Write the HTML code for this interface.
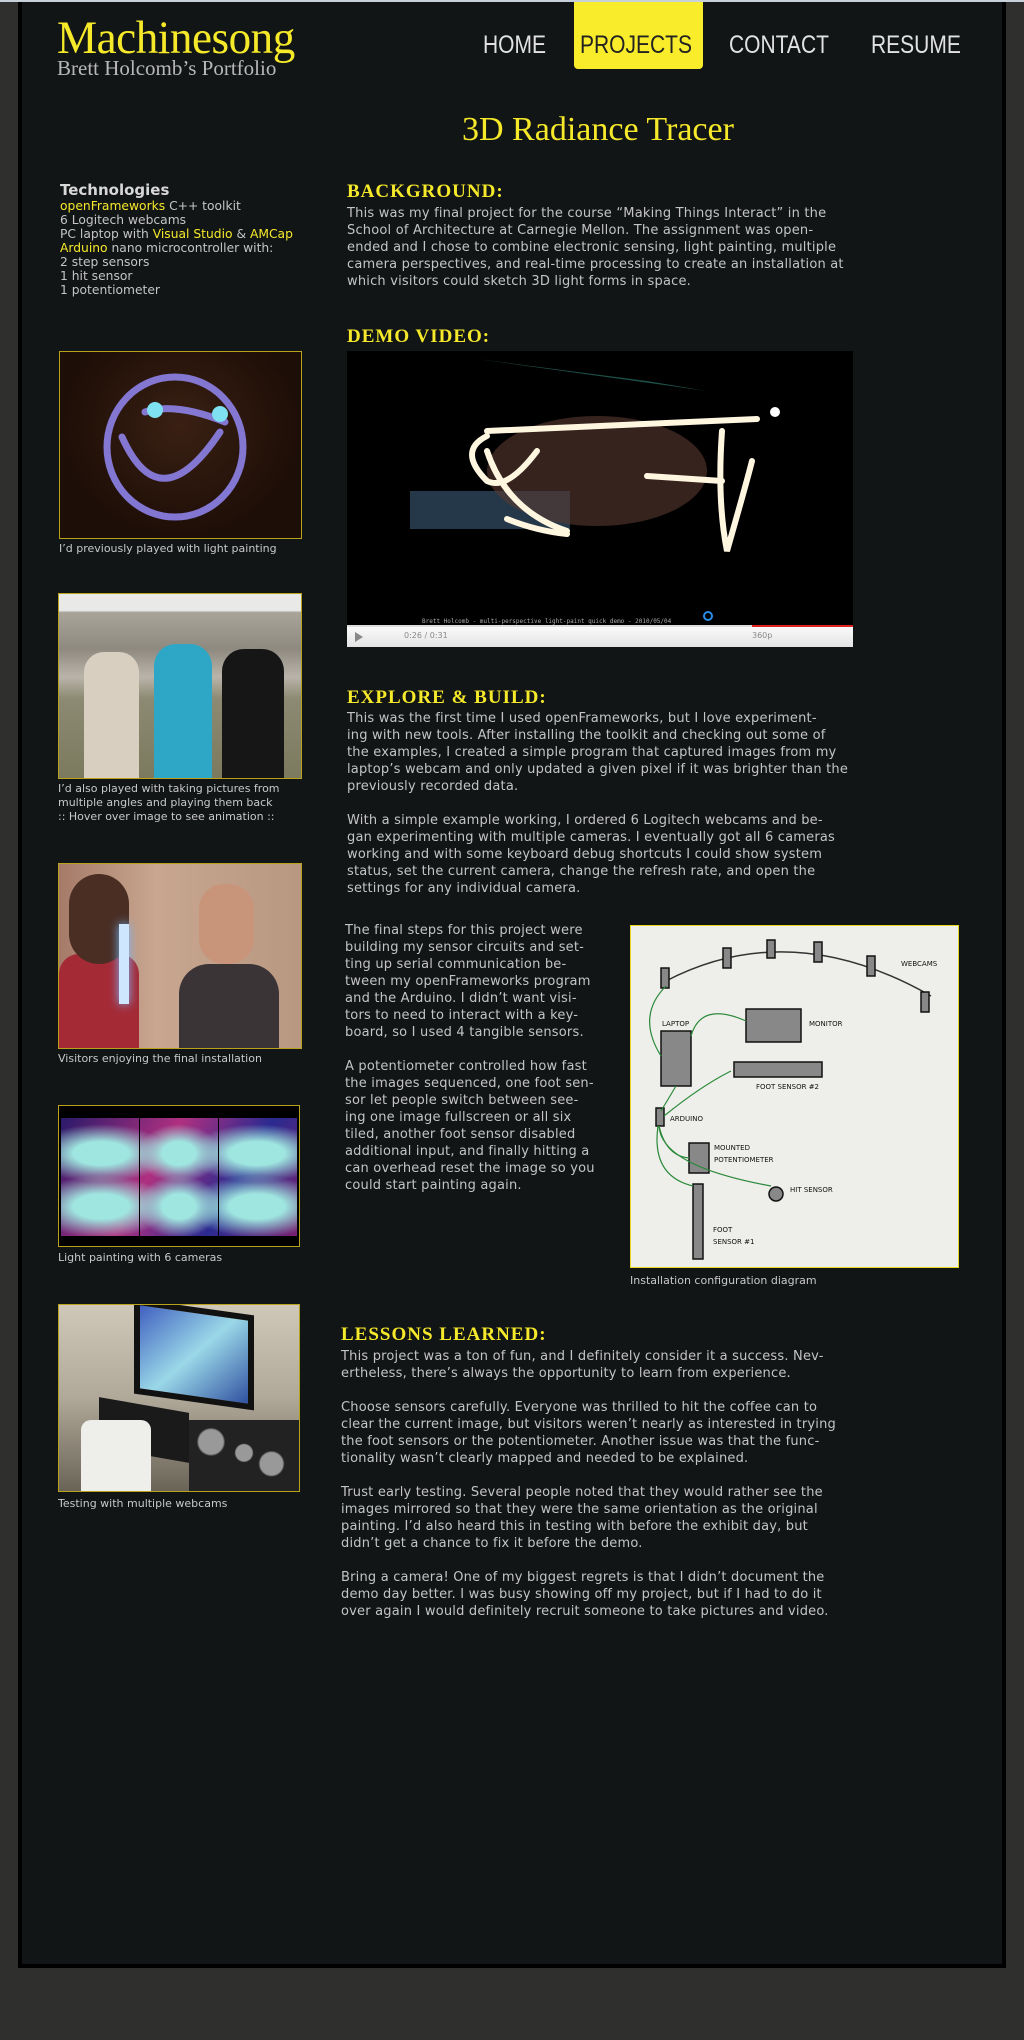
<!DOCTYPE html>
<html><head><meta charset="utf-8"><style>
*{margin:0;padding:0;box-sizing:border-box}
html,body{width:1024px;height:2040px;background:#2f2f2d;overflow:hidden}
body{position:relative;font-family:"DejaVu Sans","Liberation Sans",sans-serif}
.topline{position:absolute;left:0;top:0;width:1024px;height:2px;background:#c8d0da}
.panel{position:absolute;left:18px;top:2px;width:988px;height:1966px;background:#121516;border:4px solid #000;border-top:none}
.a{position:absolute;white-space:nowrap}
.logo{left:57px;top:11px;font-family:"Liberation Serif",serif;font-size:47px;color:#f5e92a;letter-spacing:-0.5px;transform:scaleX(0.96);transform-origin:left}
.sub{left:57px;top:56px;font-family:"Liberation Serif",serif;font-size:21px;color:#b8b8b8}
.nav{top:31px;font-family:"Liberation Sans",sans-serif;font-size:25px;color:#e2e2e2;transform:scaleX(0.84);transform-origin:left}
.pbox{position:absolute;left:574px;top:2px;width:129px;height:67px;background:#f9ec2a;border-radius:0 0 4px 4px}
.title{left:462px;top:111px;font-family:"Liberation Serif",serif;font-size:34px;color:#f5e92a}
.h{font-family:"Liberation Serif",serif;font-weight:bold;font-size:19px;color:#f5e92a;letter-spacing:1px}
.p{font-size:13px;line-height:17px;color:#c4c4c4;letter-spacing:0.2px}
.l{font-size:12.3px;line-height:14px;color:#c4c4c4}
.y{color:#f5e92a}
.cap{font-size:11px;line-height:14px;color:#c8c8c8}
.img{position:absolute;border:1px solid #b9a21a;overflow:hidden}
</style></head><body>
<div class="topline"></div>
<div class="panel"></div>
<div class="a logo">Machinesong</div>
<div class="a sub">Brett Holcomb’s Portfolio</div>
<div class="pbox"></div>
<div class="a nav" style="left:483px">HOME</div>
<div class="a nav" style="left:580px;color:#222">PROJECTS</div>
<div class="a nav" style="left:729px">CONTACT</div>
<div class="a nav" style="left:871px">RESUME</div>
<div class="a title">3D Radiance Tracer</div>

<div class="a l" style="left:60px;top:181px"><b style="font-size:15px;color:#d8d8d8;line-height:18px">Technologies</b><br><span class="y">openFrameworks</span> C++ toolkit<br>6 Logitech webcams<br>PC laptop with <span class="y">Visual Studio</span> &amp; <span class="y">AMCap</span><br><span class="y">Arduino</span> nano microcontroller with:<br>2 step sensors<br>1 hit sensor<br>1 potentiometer</div>

<div class="img" style="left:59px;top:351px;width:243px;height:188px;background:radial-gradient(ellipse at 50% 40%,#3a2013,#1d0e07 70%)">
<svg width="243" height="188"><g fill="none" stroke="#8d82e8" stroke-width="7" stroke-linecap="round" opacity=".9"><ellipse cx="115" cy="95" rx="68" ry="70"/><path d="M62 85 Q100 170 160 80"/><path d="M85 60 Q115 50 165 70"/></g><circle cx="95" cy="58" r="8" fill="#7ee0f0"/><circle cx="160" cy="62" r="8" fill="#7ee0f0"/></svg></div>
<div class="a cap" style="left:59px;top:542px">I’d previously played with light painting</div>

<div class="img" style="left:58px;top:593px;width:244px;height:186px;background:linear-gradient(#e9eae8 0,#e9eae8 9%,#a8a49a 10%,#8f8a80 30%,#b9b4aa 45%,#8c8a72 57%,#7b7a5e 100%)">
<div style="position:absolute;left:25px;top:58px;width:55px;height:130px;background:#d9cfc0;border-radius:20px 20px 0 0"></div>
<div style="position:absolute;left:95px;top:50px;width:58px;height:136px;background:#2ea7c6;border-radius:22px 22px 0 0"></div>
<div style="position:absolute;left:163px;top:55px;width:62px;height:131px;background:#161616;border-radius:22px 22px 0 0"></div></div>
<div class="a cap" style="left:58px;top:782px">I’d also played with taking pictures from<br>multiple angles and playing them back<br>:: Hover over image to see animation ::</div>

<div class="img" style="left:58px;top:863px;width:244px;height:186px;background:linear-gradient(90deg,#a57a68,#c8a690 40%,#b89880 100%)">
<div style="position:absolute;left:0;top:90px;width:80px;height:96px;background:#a42a36;border-radius:20px 20px 0 0"></div>
<div style="position:absolute;left:10px;top:10px;width:60px;height:90px;background:#4a2e24;border-radius:30px"></div>
<div style="position:absolute;left:120px;top:100px;width:100px;height:86px;background:#3a3436;border-radius:30px 30px 0 0"></div>
<div style="position:absolute;left:140px;top:20px;width:55px;height:80px;background:#c8957a;border-radius:25px"></div>
<div style="position:absolute;left:60px;top:60px;width:10px;height:80px;background:#cfe6ff;box-shadow:0 0 10px #7bf"></div></div>
<div class="a cap" style="left:58px;top:1052px">Visitors enjoying the final installation</div>

<div class="img" style="left:58px;top:1105px;width:242px;height:142px;background:#000">
<div style="position:absolute;left:2px;top:12px;width:236px;height:118px;background:repeating-linear-gradient(90deg,transparent 0 78px,#000 78px 79px),radial-gradient(ellipse at 17% 30%,#9fe6e0 10%,transparent 25%),radial-gradient(ellipse at 50% 30%,#9fe6e0 10%,transparent 25%),radial-gradient(ellipse at 83% 30%,#9fe6e0 10%,transparent 25%),radial-gradient(ellipse at 17% 75%,#9fe6e0 10%,transparent 25%),radial-gradient(ellipse at 50% 75%,#9fe6e0 10%,transparent 25%),radial-gradient(ellipse at 83% 75%,#9fe6e0 10%,transparent 25%),linear-gradient(120deg,#2a1a6a,#b03080 40%,#2a2a90 70%,#7a2070)"></div></div>
<div class="a cap" style="left:58px;top:1251px">Light painting with 6 cameras</div>

<div class="img" style="left:58px;top:1304px;width:242px;height:188px;background:linear-gradient(#cfc8b8,#b0a898 50%,#6a6458)">
<div style="position:absolute;left:75px;top:2px;width:120px;height:95px;background:linear-gradient(135deg,#4060c0,#9ad8e8 50%,#3050a0);border:6px solid #111;transform:skewY(8deg)"></div>
<div style="position:absolute;left:40px;top:100px;width:90px;height:50px;background:#1a1a1a;transform:skewY(10deg)"></div>
<div style="position:absolute;left:130px;top:115px;width:110px;height:73px;background:radial-gradient(circle at 20% 30%,#999 12%,transparent 14%),radial-gradient(circle at 50% 45%,#999 12%,transparent 14%),radial-gradient(circle at 75% 60%,#999 12%,transparent 14%),#222"></div>
<div style="position:absolute;left:22px;top:115px;width:70px;height:80px;background:#eeeeea;border-radius:10px 10px 0 0"></div></div>
<div class="a cap" style="left:58px;top:1497px">Testing with multiple webcams</div>

<div class="a h" style="left:347px;top:181px">BACKGROUND:</div>
<div class="a p" style="left:347px;top:205px">This was my final project for the course “Making Things Interact” in the<br>School of Architecture at Carnegie Mellon. The assignment was open-<br>ended and I chose to combine electronic sensing, light painting, multiple<br>camera perspectives, and real-time processing to create an installation at<br>which visitors could sketch 3D light forms in space.</div>

<div class="a h" style="left:347px;top:326px">DEMO VIDEO:</div>
<div style="position:absolute;left:347px;top:351px;width:506px;height:296px;background:#000;overflow:hidden">
<svg width="506" height="274"><path d="M130 8 L300 30 L360 40 L130 8Z" fill="#1d5048"/><rect x="63" y="140" width="160" height="38" fill="#34506a" opacity=".7"/><ellipse cx="250" cy="120" rx="110" ry="55" fill="#5a3a30" opacity=".6"/><g fill="none" stroke="#fff6e0" stroke-width="6" stroke-linecap="round"><path d="M140 80 L410 68"/><path d="M140 85 Q110 100 140 130 Q160 140 190 100"/><path d="M140 100 Q160 160 220 180"/><path d="M300 125 L375 130"/><path d="M375 80 Q370 150 380 200 Q400 130 405 110"/><path d="M160 168 Q190 180 220 183"/></g><circle cx="428" cy="61" r="5" fill="#fff"/><text x="75" y="272" font-family="DejaVu Sans Mono,monospace" font-size="6" fill="#aaa">Brett Holcomb - multi-perspective light-paint quick demo - 2010/05/04</text><circle cx="361" cy="265" r="4" fill="none" stroke="#2a8ae8" stroke-width="2"/></svg>
<div style="position:absolute;left:0;top:274px;width:506px;height:22px;background:linear-gradient(#fafafa,#e4e4e4);border-top:2px solid #ddd"></div>
<div style="position:absolute;left:405px;top:274px;width:101px;height:2px;background:#d22"></div>
<div style="position:absolute;left:8px;top:281px;width:0;height:0;border-left:8px solid #888;border-top:5px solid transparent;border-bottom:5px solid transparent"></div>
<div class="a" style="left:57px;top:280px;font-size:8px;color:#888">0:26 / 0:31</div>
<div class="a" style="left:405px;top:280px;font-size:8px;color:#888">360p</div></div>

<div class="a h" style="left:347px;top:687px">EXPLORE &amp; BUILD:</div>
<div class="a p" style="left:347px;top:710px">This was the first time I used openFrameworks, but I love experiment-<br>ing with new tools. After installing the toolkit and checking out some of<br>the examples, I created a simple program that captured images from my<br>laptop’s webcam and only updated a given pixel if it was brighter than the<br>previously recorded data.<br><br>With a simple example working, I ordered 6 Logitech webcams and be-<br>gan experimenting with multiple cameras. I eventually got all 6 cameras<br>working and with some keyboard debug shortcuts I could show system<br>status, set the current camera, change the refresh rate, and open the<br>settings for any individual camera.</div>

<div class="a p" style="left:345px;top:922px">The final steps for this project were<br>building my sensor circuits and set-<br>ting up serial communication be-<br>tween my openFrameworks program<br>and the Arduino. I didn’t want visi-<br>tors to need to interact with a key-<br>board, so I used 4 tangible sensors.<br><br>A potentiometer controlled how fast<br>the images sequenced, one foot sen-<br>sor let people switch between see-<br>ing one image fullscreen or all six<br>tiled, another foot sensor disabled<br>additional input, and finally hitting a<br>can overhead reset the image so you<br>could start painting again.</div>

<div class="img" style="left:630px;top:925px;width:329px;height:343px;background:#eeeeea;border-color:#e8d820">
<svg width="329" height="343" font-family="DejaVu Sans,sans-serif" font-size="7" fill="#111"><path d="M35 55 Q160 -10 300 70" fill="none" stroke="#333" stroke-width="1.5"/><g fill="#888" stroke="#111" stroke-width="1.5"><rect x="30" y="42" width="8" height="20"/><rect x="92" y="22" width="8" height="20"/><rect x="136" y="14" width="8" height="18"/><rect x="183" y="16" width="8" height="20"/><rect x="236" y="30" width="8" height="20"/><rect x="290" y="66" width="8" height="20"/><rect x="30" y="105" width="30" height="55"/><rect x="115" y="83" width="55" height="33"/><rect x="103" y="136" width="88" height="15"/><rect x="25" y="182" width="8" height="18"/><rect x="58" y="217" width="20" height="30"/><rect x="62" y="258" width="10" height="75"/><circle cx="145" cy="268" r="7"/></g><g fill="none" stroke="#2a8a3a" stroke-width="1.2"><path d="M35 60 Q5 90 30 130"/><path d="M60 110 Q70 75 115 95"/><path d="M45 160 L30 185"/><path d="M33 190 Q70 160 100 145"/><path d="M28 200 Q35 230 58 232"/><path d="M27 200 Q20 250 62 260"/><path d="M28 200 Q30 240 140 260"/></g><text x="270" y="40">WEBCAMS</text><text x="31" y="100">LAPTOP</text><text x="178" y="100">MONITOR</text><text x="125" y="163">FOOT SENSOR #2</text><text x="39" y="195">ARDUINO</text><text x="83" y="224">MOUNTED</text><text x="83" y="236">POTENTIOMETER</text><text x="159" y="266">HIT SENSOR</text><text x="82" y="306">FOOT</text><text x="82" y="318">SENSOR #1</text></svg></div>
<div class="a cap" style="left:630px;top:1274px">Installation configuration diagram</div>

<div class="a h" style="left:341px;top:1324px">LESSONS LEARNED:</div>
<div class="a p" style="left:341px;top:1348px">This project was a ton of fun, and I definitely consider it a success. Nev-<br>ertheless, there’s always the opportunity to learn from experience.<br><br>Choose sensors carefully. Everyone was thrilled to hit the coffee can to<br>clear the current image, but visitors weren’t nearly as interested in trying<br>the foot sensors or the potentiometer. Another issue was that the func-<br>tionality wasn’t clearly mapped and needed to be explained.<br><br>Trust early testing. Several people noted that they would rather see the<br>images mirrored so that they were the same orientation as the original<br>painting. I’d also heard this in testing with before the exhibit day, but<br>didn’t get a chance to fix it before the demo.<br><br>Bring a camera! One of my biggest regrets is that I didn’t document the<br>demo day better. I was busy showing off my project, but if I had to do it<br>over again I would definitely recruit someone to take pictures and video.</div>
</body></html>
